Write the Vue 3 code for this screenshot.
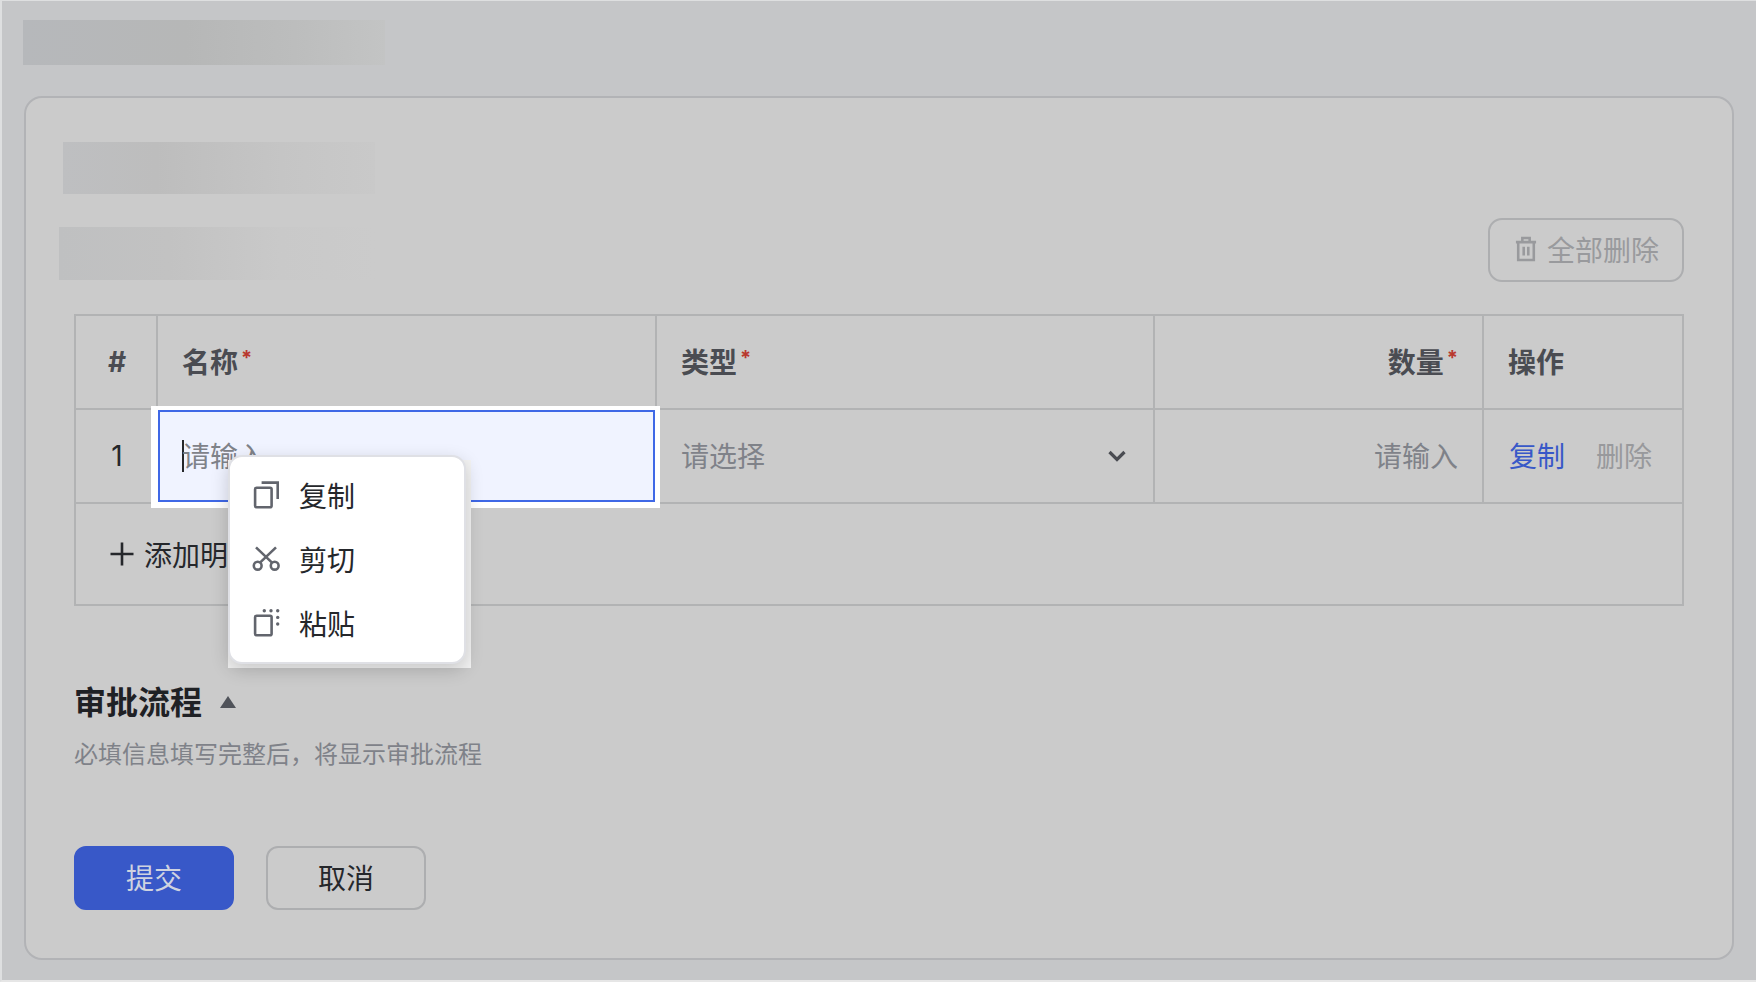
<script setup>
const menu = [
  { key: 'copy', label: '复制' },
  { key: 'cut', label: '剪切' },
  { key: 'paste', label: '粘贴' },
]
</script>

<template>
  <div class="page">
    <div class="blur blur-top"></div>
    <section class="card">
      <div class="blur blur-one"></div>
      <div class="tools">
        <div class="blur blur-two"></div>
        <button class="ghost">
          <svg class="trash" viewBox="0 0 24 28" fill="none" stroke="currentColor" stroke-width="2.8">
            <path d="M1 6.5H23M8 6V2H16V6M3.5 6.5V26H20.5V6.5M9.5 11.5V21M14.5 11.5V21" />
          </svg>
          全部删除
        </button>
      </div>

      <div class="table">
        <div class="cell head center">#</div>
        <div class="cell head">名称<i>*</i></div>
        <div class="cell head">类型<i>*</i></div>
        <div class="cell head right">数量<i>*</i></div>
        <div class="cell head last">操作</div>

        <div class="cell center body-text">1</div>
        <div class="cell focus-cell">
          <div class="input"><span class="caret"></span><span class="ph tight">请输入</span></div>
          <div class="menu-halo"></div>
          <ul class="menu">
            <li v-for="m in menu" :key="m.key">
              <svg class="mi" viewBox="0 0 28 28" fill="none" stroke="#62656d" stroke-width="2.6">
                <template v-if="m.key === 'copy'">
                  <rect x="3.1" y="6.8" width="16.5" height="19.4" rx="1.5" />
                  <path d="M9.6 1.6H25.7V18" />
                </template>
                <template v-else-if="m.key === 'cut'">
                  <circle cx="5.7" cy="20.7" r="3.9" />
                  <circle cx="22.7" cy="20.7" r="3.9" />
                  <path d="M4 2.4L20 17.6M24 2.4L8 17.6" />
                </template>
                <template v-else>
                  <rect x="3.1" y="6.8" width="16.5" height="19.4" rx="1.5" />
                  <g fill="#62656d" stroke="none">
                    <circle cx="12.3" cy="1.8" r="1.7" />
                    <circle cx="19" cy="1.8" r="1.7" />
                    <circle cx="25.7" cy="1.8" r="1.7" />
                    <circle cx="25.7" cy="8.4" r="1.7" />
                    <circle cx="25.7" cy="15" r="1.7" />
                  </g>
                </template>
              </svg>
              {{ m.label }}
            </li>
          </ul>
        </div>
        <div class="cell select">
          <span class="ph">请选择</span>
          <svg class="chev" viewBox="0 0 18 12" fill="none" stroke="#4a4c52" stroke-width="3.2">
            <path d="M1.5 2L9 9.5L16.5 2" />
          </svg>
        </div>
        <div class="cell right"><span class="ph">请输入</span></div>
        <div class="cell last ops"><span class="link">复制</span><span class="mute">删除</span></div>

        <div class="add">
          <svg class="plus" viewBox="0 0 24 24" fill="none" stroke="#25272b" stroke-width="2.6">
            <path d="M12 0.5V23.5M0.5 12H23.5" />
          </svg>
          添加明细
        </div>
      </div>

      <h2 class="title">审批流程<span class="tri"></span></h2>
      <p class="sub">必填信息填写完整后，将显示审批流程</p>

      <div class="buttons">
        <button class="btn primary">提交</button>
        <button class="btn">取消</button>
      </div>
    </section>
  </div>
</template>

<style scoped>
.page {
  box-sizing: border-box;
  width: 1756px;
  height: 982px;
  padding: 19px 21px 0 22px;
  background: #c5c6c8;
  border-left: 2px solid #dedfe0;
  border-top: 1px solid #dedfe0;
  border-bottom: 2px solid #e6e6e6;
  overflow: hidden;
  font-family: Inter, "Noto Sans CJK SC", sans-serif;
  font-size: 28px;
  color: #25272b;
}
.blur-top {
  width: 362px;
  height: 45px;
  margin-left: -1px;
  background: linear-gradient(90deg, #b6b8bb 0%, #b6b7b7 45%, #bcbdbd 75%, #c3c4c4 100%);
}
.card {
  box-sizing: border-box;
  width: 1710px;
  height: 864px;
  margin-top: 31px;
  padding: 44px 48px 0;
  background: #cbcbcb;
  border: 2px solid #b2b3b6;
  border-radius: 18px;
}
.blur-one {
  width: 312px;
  height: 52px;
  margin-left: -11px;
  background: linear-gradient(90deg, #bebfc1 0%, #bdbdbd 30%, #c5c5c5 70%, #c9c9c9 100%);
}
.tools {
  display: flex;
  justify-content: space-between;
  align-items: flex-start;
  height: 64px;
  margin-top: 24px;
}
.blur-two {
  width: 316px;
  height: 53px;
  margin: 9px 0 0 -15px;
  background: linear-gradient(90deg, #bfc0c1 0%, #c2c2c2 35%, #c9c9c9 70%, #cbcbcb 100%);
}
.ghost {
  box-sizing: border-box;
  display: flex;
  align-items: center;
  justify-content: center;
  gap: 10px;
  width: 196px;
  height: 64px;
  background: transparent;
  border: 2px solid #adaeb0;
  border-radius: 14px;
  color: #999a9d;
  font: inherit;
  padding: 0 0 2px 2px;
}
.trash { width: 22px; height: 26px; }
.table {
  display: grid;
  grid-template-columns: 82px 499px 498px 329px 1fr;
  grid-template-rows: 94px 94px 100px;
  box-sizing: border-box;
  width: 1610px;
  height: 292px;
  margin-top: 32px;
  border: 2px solid #b2b3b4;
}
.cell {
  box-sizing: border-box;
  display: flex;
  align-items: center;
  padding: 0 24px 3px;
  border-right: 2px solid #b2b3b4;
  border-bottom: 2px solid #b2b3b4;
}
.cell.last { border-right: 0; }
.center { justify-content: center; padding: 0 0 1px 2px; }
.right { justify-content: flex-end; }
.head { color: #4a4c52; font-weight: 700; }
.head i { font-style: normal; font-weight: 700; font-size: 20px; color: #b9382f; margin: -5px 0 0 3px; }
.body-text { color: #25272b; }
.ph { color: #7f8289; }
.tight { margin: 0 0 3px -2px; }
.focus-cell { position: relative; padding: 0; }
.input {
  position: relative;
  z-index: 1;
  box-sizing: border-box;
  display: flex;
  align-items: center;
  width: 100%;
  height: 92px;
  margin: 1px 0;
  padding-left: 22px;
  background: #f0f3ff;
  border: 2px solid #3f68e6;
  box-shadow: 0 1px 0 5px #fff, -2px 1px 0 5px #fff;
}
.caret { width: 2px; height: 32px; background: #25272b; }
.menu-halo {
  position: absolute;
  z-index: 2;
  left: 70px;
  top: 50px;
  width: 243px;
  height: 208px;
  background: #f3f3f3;
}
.menu {
  position: absolute;
  z-index: 3;
  left: 70px;
  top: 45px;
  box-sizing: border-box;
  width: 238px;
  height: 209px;
  margin: 0;
  padding: 6px 0;
  list-style: none;
  background: #fff;
  border: 2px solid #dfe0e5;
  border-radius: 14px;
  box-shadow: 0 6px 18px rgba(0, 0, 0, 0.18);
}
.menu li {
  display: flex;
  align-items: center;
  gap: 19px;
  height: 64px;
  padding: 0 0 1px 22px;
  box-sizing: border-box;
}
.mi { width: 28px; height: 28px; }
.select { justify-content: space-between; }
.chev { width: 18px; height: 12px; margin: 2px 3px 0 0; }
.ops { gap: 31px; padding-left: 25px; }
.link { color: #3858c8; }
.mute { color: #98999c; }
.add {
  grid-column: 1 / -1;
  display: flex;
  align-items: center;
  gap: 10px;
  padding-left: 34px;
}
.plus { width: 24px; height: 24px; }
.title {
  display: flex;
  align-items: center;
  margin: 75px 0 0 0;
  font-size: 32px;
  line-height: 44px;
  font-weight: 700;
  color: #1f2125;
}
.tri {
  width: 0;
  height: 0;
  margin: -2px 0 0 18px;
  border-left: 8px solid transparent;
  border-right: 8px solid transparent;
  border-bottom: 12px solid #50535a;
}
.sub {
  margin: 12px 0 0;
  font-size: 24px;
  line-height: 36px;
  color: #7f8289;
}
.buttons {
  display: flex;
  gap: 32px;
  margin-top: 73px;
}
.btn {
  box-sizing: border-box;
  width: 160px;
  height: 64px;
  padding: 0 0 2px;
  background: transparent;
  border: 2px solid #adaeb0;
  border-radius: 12px;
  color: #25272b;
  font: inherit;
}
.primary {
  background: #3858c8;
  border-color: #3858c8;
  color: #cfd3e0;
}
</style>
